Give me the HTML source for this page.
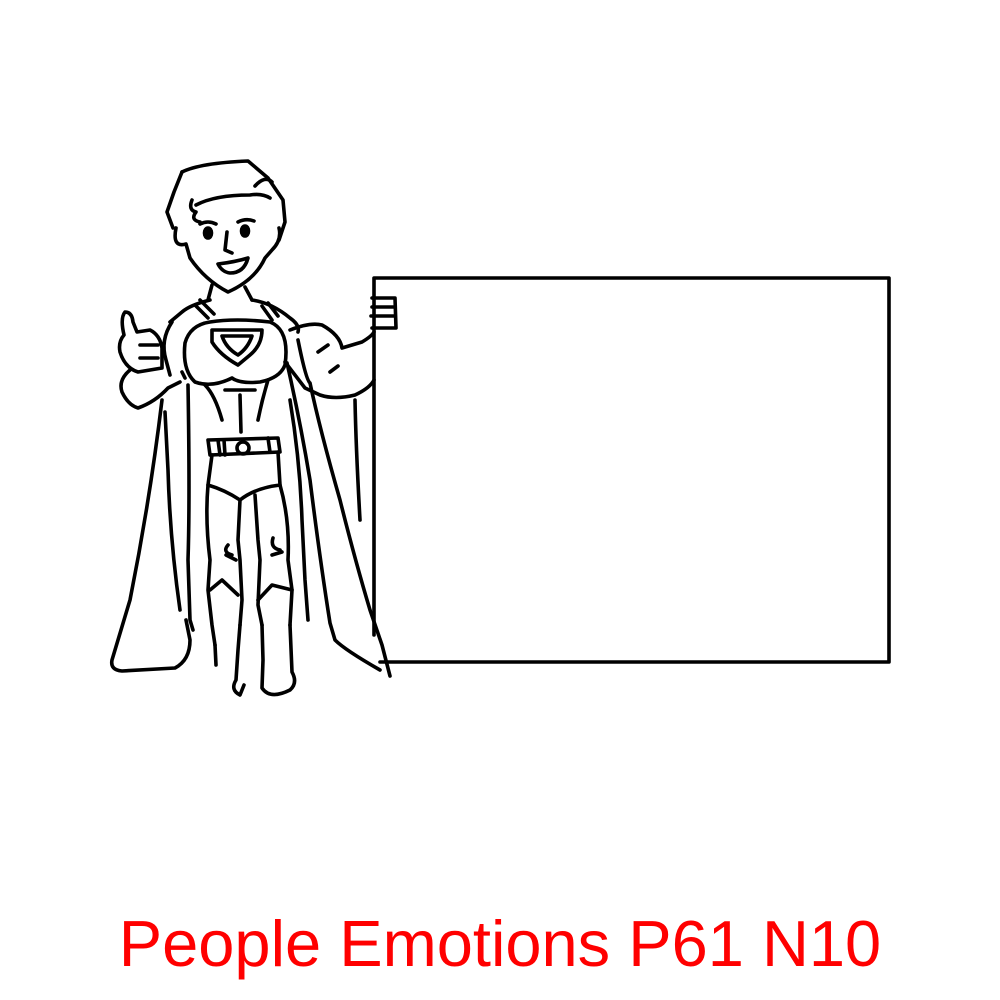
<!DOCTYPE html>
<html><head><meta charset="utf-8"><style>
html,body{margin:0;padding:0;background:#fff;width:1000px;height:1000px;overflow:hidden}
svg{position:absolute;left:0;top:0}
.t{position:absolute;left:0;width:1000px;text-align:center;top:904px;font-family:"Liberation Sans",sans-serif;font-size:65px;color:#f00;line-height:80px;white-space:nowrap}
</style></head><body>
<svg width="1000" height="1000" viewBox="0 0 1000 1000" fill="none" stroke="#000" stroke-width="3.6" stroke-linecap="round" stroke-linejoin="round">
<path d="M374,635 L374,278 L889,278 L889,662 L380,662"/>
<path d="M182,172 Q200,163 248,161 L268,178 L283,200 L285,222 L279,240"/>
<path d="M182,172 L174,192 L167,212 L173,228"/>
<path d="M255,186 Q265,175 272,182"/>
<path d="M192,200 Q188,210 196,212 Q190,220 200,222 M196,205 Q215,195 250,195 Q262,193 270,198"/>
<path d="M176,228 Q172,248 186,244 L190,258 Q205,280 228,292 Q255,280 265,258 L272,250 Q282,240 279,228"/>
<path d="M200,224 Q208,220 216,224 M238,222 Q246,218 254,221"/>
<ellipse cx="208" cy="233" rx="3.5" ry="5" fill="#000"/>
<ellipse cx="245" cy="231" rx="3.5" ry="5" fill="#000"/>
<path d="M227,232 L225,250 L232,253"/>
<path d="M218,264 Q235,262 248,258 Q244,273 230,273 Q222,272 218,264 Z"/>
<path d="M212,285 L208,300 M245,287 L252,300"/>
<path d="M210,300 Q190,305 182,312 L170,322 M252,300 Q272,303 290,318 Q300,325 298,332"/>
<path d="M195,305 L208,318 M200,300 L214,314 M262,306 L272,320 M268,303 L278,316"/>
<path d="M185,343 Q190,325 210,322 Q235,318 270,322 Q290,330 285,365 Q280,378 260,382 Q240,384 232,378 Q212,388 195,382 Q182,370 185,343 Z"/>
<path d="M212,330 L262,330 Q262,345 250,355 L238,365 Q220,355 212,342 Z"/>
<path d="M222,336 L252,336 Q248,348 238,355 Q226,348 222,336 Z"/>
<path d="M205,385 Q215,395 222,420 M268,380 Q262,400 258,420 M240,395 L241,432 M225,390 L255,390"/>
<path d="M208,440 L278,438 L280,452 L210,455 Z"/>
<path d="M218,440 L220,455 M224,440 L225,455 M268,438 L270,452"/>
<circle cx="243" cy="448" r="6"/>
<path d="M212,455 L208,485 Q225,490 240,500 Q255,488 280,485 L278,452"/>
<path d="M208,485 Q205,520 210,560 L208,590 L212,625 L215,645 M240,500 L238,540 L240,560 L242,600 L240,625 M255,495 L258,540 L260,560 L258,605 L262,625 M280,485 Q290,520 288,560 L292,590 L290,625"/>
<path d="M210,590 L222,580 L238,595 M258,600 L272,585 L292,590"/>
<path d="M228,545 Q222,552 232,555 M226,555 L236,560 M273,538 Q270,548 280,550 M272,555 L282,552"/>
<path d="M240,625 L238,650 L236,680 Q230,690 240,695 L244,685 M262,625 L263,660 L262,688 Q270,700 290,690 Q298,683 292,672 L290,625"/>
<path d="M215,645 L216,665"/>
<path d="M124,335 Q120,318 125,312 Q132,312 133,322 L137,332 L150,330 Q160,335 162,348 L162,368 L150,370 L138,372 Q125,368 120,352 Q118,342 124,335 Z"/>
<path d="M140,345 L158,345 M140,358 L158,358 M182,372 L185,378"/>
<path d="M130,370 Q118,380 122,392 Q128,405 138,408 Q155,402 168,388 L180,382"/>
<path d="M172,322 Q160,340 166,360 L170,375"/>
<path d="M162,400 Q150,500 130,600 L112,660 Q110,670 122,671 L175,668 Q190,660 190,640 L186,620"/>
<path d="M188,385 Q190,500 188,560 L190,620 L193,630"/>
<path d="M165,412 L168,470 Q170,540 180,610"/>
<path d="M290,330 Q310,322 322,325 Q340,335 342,348 L362,342 Q372,336 374,332 M285,362 L305,388 L320,395 Q335,400 355,395 Q370,388 374,380"/>
<path d="M328,345 L318,352 M338,366 L330,372"/>
<path d="M372,298 L395,298 L396,328 L372,328 M372,307 L393,307 M371,316 L394,316"/>
<path d="M298,340 Q306,380 310,383 Q320,430 340,500 Q355,560 370,610 L382,645 L390,676"/>
<path d="M287,363 Q300,420 310,480 Q320,560 330,623 L335,640 Q345,650 380,670"/>
<path d="M290,400 Q300,460 302,520 L305,580 L308,620 M355,400 Q356,450 360,520"/>
</svg>
<div class="t">People Emotions P61 N10</div>
</body></html>
